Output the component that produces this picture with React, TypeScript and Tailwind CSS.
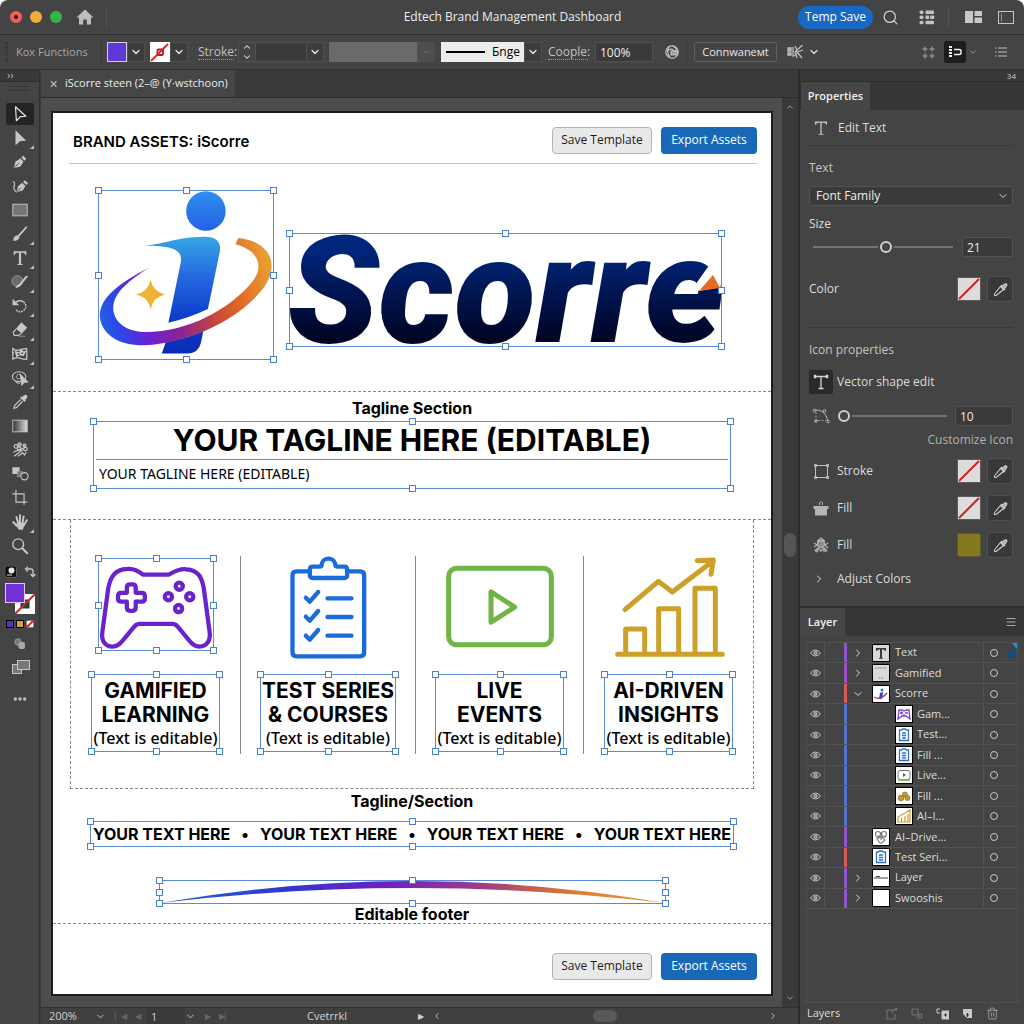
import type { ReactNode } from 'react'
import {
  ChevronDown,
  ChevronLeft,
  ChevronRight,
  ChevronUp,
  Menu,
  MoreHorizontal,
  Search,
  Trash2,
} from 'lucide-react'

const FEATURES = [
  { id: 'gamified', lines: ['GAMIFIED', 'LEARNING'], icon: <GamepadArt />, selected: true },
  { id: 'tests', lines: ['TEST SERIES', '& COURSES'], icon: <ClipboardArt />, selected: false },
  { id: 'live', lines: ['LIVE', 'EVENTS'], icon: <VideoArt />, selected: false },
  { id: 'insights', lines: ['AI-DRIVEN', 'INSIGHTS'], icon: <ChartArt />, selected: false },
]

const TICKER = ['YOUR TEXT HERE', '•', 'YOUR TEXT HERE', '•', 'YOUR TEXT HERE', '•', 'YOUR TEXT HERE']

type Layer = {
  name: string
  bar: string
  arrow?: 'right' | 'down'
  child?: boolean
  thumb: ReactNode
}

const LAYERS: Layer[] = [
  { name: 'Text', bar: 'bg-[#8e55cf]', arrow: 'right', thumb: <ThumbText /> },
  { name: 'Gamified', bar: 'bg-[#9c50c8]', arrow: 'right', thumb: <ThumbPage /> },
  { name: 'Scorre', bar: 'bg-[#d55a5a]', arrow: 'down', thumb: <ThumbLogo /> },
  { name: 'Gam...', bar: 'bg-[#5272cc]', child: true, thumb: <ThumbPad /> },
  { name: 'Test...', bar: 'bg-[#5272cc]', child: true, thumb: <ThumbClip /> },
  { name: 'Fill ...', bar: 'bg-[#5272cc]', child: true, thumb: <ThumbClip /> },
  { name: 'Live...', bar: 'bg-[#5272cc]', child: true, thumb: <ThumbLive /> },
  { name: 'Fill ...', bar: 'bg-[#5272cc]', child: true, thumb: <ThumbCoins /> },
  { name: 'AI–I...', bar: 'bg-[#5272cc]', child: true, thumb: <ThumbChart /> },
  { name: 'AI–Drive...', bar: 'bg-[#8e55cf]', thumb: <ThumbBrain /> },
  { name: 'Test Seri...', bar: 'bg-[#d55a5a]', thumb: <ThumbClip /> },
  { name: 'Layer', bar: 'bg-[#8e55cf]', arrow: 'right', thumb: <ThumbLine /> },
  { name: 'Swooshis', bar: 'bg-[#8e55cf]', arrow: 'right', thumb: null },
]

export default function App() {
  return (
    <div className="bg-white">
      <div className="flex min-h-screen flex-col overflow-hidden rounded-t-lg bg-[#444444] font-['Open_Sans',sans-serif] text-xs text-[#dcdcdc]">
        <TitleBar />
        <ControlBar />
        <div className="flex flex-1">
          <ToolColumn />
          <Workspace />
          <div className="flex w-[226px] shrink-0 flex-col border-l-2 border-[#2c2c2c]">
            <PropertiesPanel />
            <LayerPanel />
          </div>
        </div>
      </div>
    </div>
  )
}

/* ── Top bars ── */
function TitleBar() {
  return (
    <header className="flex h-[35px] items-center border-b border-[#303030] pr-[10px] pl-[10px]">
      <div className="flex items-center gap-2">
        <span className="flex size-3 items-center justify-center rounded-full bg-[#f0605a]">
          <span className="size-1 rounded-full bg-[#3a1010]" />
        </span>
        <span className="size-3 rounded-full bg-[#eeae3a]" />
        <span className="size-3 rounded-full bg-[#34b548]" />
      </div>
      <button aria-label="Home" className="ml-[14px]">
        <svg width="18" height="16" viewBox="0 0 18 16" fill="#bdbdbd">
          <path d="M9 0.5 17.5 8.5H15V15.5H10.8V10.5H7.2V15.5H3V8.5H0.5Z" />
        </svg>
      </button>
      <span className="ml-3 h-5 w-px bg-[#555]" />
      <h1 className="flex-1 pl-[120px] text-center text-[12px] text-[#ececec]">
        Edtech Brand Management Dashboard
      </h1>
      <button className="h-[23px] w-[75px] rounded-full bg-[#1769c4] text-[12px] text-white">Temp Save</button>
      <button aria-label="Search" className="ml-[9px]">
        <Search size={17} strokeWidth={1.75} className="text-[#cfcfcf]" />
      </button>
      <button aria-label="Grid view" className="ml-5">
        <svg width="16" height="15" viewBox="0 0 16 15" fill="#c2c2c2">
          <rect x="0.5" y="0.5" width="4" height="3.4" rx="1.5" />
          <rect x="6.5" y="0.5" width="8.5" height="3.4" rx="0.6" />
          <rect x="0.5" y="5.6" width="4" height="3.4" rx="1.5" />
          <rect x="6.5" y="5.6" width="3.6" height="3.4" rx="0.6" />
          <rect x="11.2" y="5.6" width="4" height="3.4" rx="0.6" />
          <rect x="0.5" y="10.8" width="4" height="3.4" rx="1.5" />
          <rect x="6.5" y="10.8" width="8.5" height="3.4" rx="1" />
        </svg>
      </button>
      <span className="ml-[13px] h-5 w-px bg-[#555]" />
      <button aria-label="Arrange panels" className="ml-4">
        <svg width="17" height="12" viewBox="0 0 17 12" fill="#c8c8c8">
          <rect width="8" height="12" />
          <rect x="9.5" width="7.5" height="5" />
          <rect x="9.5" y="6.5" width="7.5" height="5.5" />
        </svg>
      </button>
      <button aria-label="Workspace" className="ml-4">
        <svg width="16" height="13" viewBox="0 0 16 13" fill="none" stroke="#c8c8c8">
          <rect x="0.5" y="0.5" width="15" height="12" />
          <path d="M3.5 2.5V10.5" stroke="#999" />
        </svg>
      </button>
    </header>
  )
}

function DropButton({ label }: { label: string }) {
  return (
    <button aria-label={label} className="flex h-5 w-[18px] items-center justify-center border border-[#505050] bg-[#3d3d3d] text-[#e8e8e8]">
      <ChevronDown size={12} strokeWidth={2.5} />
    </button>
  )
}

function ControlBar() {
  return (
    <div className="flex h-[35px] items-center border-b border-[#303030] pl-[5px]">
      <span className="h-5 w-[3px] border-x border-dotted border-[#2c2c2c]" />
      <span className="ml-2 w-[86px] border-r border-[#383838] py-1 text-[11px] text-[#a8a8a8]">Kox Functions</span>
      <button aria-label="Fill colour" className="ml-[5px] size-5 border border-[#cfcfe8] bg-[#5f38d6]" />
      <DropButton label="Fill options" />
      <button aria-label="Stroke colour" className="ml-[5px] size-5 bg-white">
        <svg width="20" height="20" viewBox="0 0 20 20" fill="none" stroke="#d02626" strokeWidth="1.8">
          <rect x="7.5" y="7.5" width="5.5" height="5.5" rx="1" stroke="#a02030" />
          <path d="M1 19 18 2" />
        </svg>
      </button>
      <DropButton label="Stroke options" />
      <label htmlFor="stroke-width" className="ml-[10px] w-9 border-b border-dotted border-[#999] text-[12px] leading-[14px] whitespace-nowrap text-[#c0c0c0]">
        Stroke:
      </label>
      <span className="ml-1 flex h-5 w-[18px] shrink-0 flex-col items-center justify-center border border-[#505050] text-[#e8e8e8]">
        <ChevronUp size={10} strokeWidth={2.5} className="shrink-0" />
        <ChevronDown size={10} strokeWidth={2.5} className="shrink-0" />
      </span>
      <input id="stroke-width" className="h-5 w-[50px] border-y border-[#505050] bg-[#3a3a3a] px-1 outline-none" />
      <DropButton label="Stroke width list" />
      <span className="ml-[5px] h-5 w-[88px] bg-[#6a6a6a]" />
      <button aria-label="Profile" className="flex h-5 w-[18px] items-center justify-center bg-[#4e4e4e] text-[#777]">
        <ChevronDown size={10} />
      </button>
      <button className="ml-[6px] flex h-5 w-[83px] items-center bg-[#ececec] pl-[5px] text-[12px] text-black">
        <svg width="39" height="4" viewBox="0 0 39 4">
          <path d="M0 2H39" stroke="#000" strokeWidth="2" />
        </svg>
        <span className="ml-[7px]">Бnge</span>
      </button>
      <DropButton label="Brush list" />
      <label htmlFor="opacity" className="ml-[6px] w-10 border-b border-dotted border-[#999] text-[12px] leading-[14px] whitespace-nowrap text-[#c0c0c0]">
        Coople:
      </label>
      <input id="opacity" defaultValue="100%" className="ml-[7px] h-5 w-[58px] border border-[#505050] bg-[#3a3a3a] px-1 text-[12px] text-[#eee] outline-none" />
      <button aria-label="Recolor" className="ml-3">
        <svg width="14" height="14" viewBox="0 0 14 14" fill="none" stroke="#c4c4c4" strokeWidth="1.2">
          <circle cx="7" cy="7" r="6.2" />
          <path d="M4 1.5q-3 5 1 11M8 1q5 3 4.500 8M2 6q4-3 6-1t5 1" />
          <path d="M6 6h5v4H6Z" fill="#9a9a9a" />
        </svg>
      </button>
      <span className="ml-[7px] h-6 w-px bg-[#383838]" />
      <button className="ml-[7px] h-5 w-[83px] rounded-xs border border-[#606060] text-[11px] text-[#e6e6e6]">Connwaneмt</button>
      <button aria-label="Align" className="ml-[10px]">
        <svg width="17" height="16" viewBox="0 0 17 16" fill="none" stroke="#bdbdbd" strokeWidth="1.3">
          <path d="M1 4h3v3H1zM1 9h3v2H1z" fill="#a0a0a0" />
          <path d="M6 3v10M15.500 1 8 8l2 6M8 2l2 4M16 6l-6 2 5 6M7 12l4-3" />
        </svg>
      </button>
      <ChevronDown size={12} strokeWidth={2.5} className="ml-1" />
      <div className="ml-auto flex items-center pr-[17px]">
        <svg width="13" height="13" viewBox="0 0 13 13" stroke="#8a8a8a" strokeWidth="1.6">
          <path d="M3 0.5v5M0.5 3h5M10 0.5v5M7.5 3h5M3 7.5v5M0.5 10h5M10 7.5v5M7.5 10h5" />
        </svg>
        <button aria-label="Snap" className="ml-[9px] flex size-[22px] items-center justify-center rounded-xs bg-[#1d1d1d]">
          <svg width="14" height="14" viewBox="0 0 14 14" fill="none" stroke="#eee" strokeWidth="1.5">
            <path d="M2.5 1v12" strokeWidth="3" strokeDasharray="2 1" />
            <path d="M6 4.500h5q2 0 2 1.500v2q0 1.500-2 1.500H6" />
          </svg>
        </button>
        <ChevronDown size={10} className="ml-[2px] text-[#aaa]" />
        <button aria-label="Panel menu" className="ml-[17px]">
          <svg width="12" height="10" viewBox="0 0 12 10" stroke="#c0c0c0" strokeWidth="1.2">
            <path d="M0 1h1.5M3 1h9M0 5h1.5M3 5h9M0 9h1.5M3 9h9" />
          </svg>
        </button>
      </div>
    </div>
  )
}

/* ── Tool column ── */
const G = '#c6c6c6'

const TOOLS: { name: string; more?: boolean; icon: ReactNode }[] = [
  { name: 'Selection', icon: <path d="M5 2 16.500 12.500 10.500 13 6 17.500Z" fill="none" stroke="#e8e8e8" strokeWidth="1.3" strokeLinejoin="round" /> },
  { name: 'Direct selection', more: true, icon: <path d="M5 1.5 17 13 10.500 13.2 5 18Z" fill={G} /> },
  {
    name: 'Pen',
    icon: (
      <g fill={G}>
        <path d="M3 17 5 9.5 10.5 6 14 9.5 10.5 15Z" />
        <path d="M11.5 5 13.5 3 17 6.5 15 8.5Z" />
        <path d="M3.5 16.5 8.5 11.5" stroke="#444" strokeWidth="1" />
      </g>
    ),
  },
  {
    name: 'Curvature',
    icon: (
      <g>
        <path d="M6 17 8 10 12.5 6.5 16 10 13 15Z" fill={G} />
        <path d="M13.5 5.5 15.5 3.5 19 7 17 9Z" fill={G} />
        <path d="M2 5q3 1 1.5 5t3 7" fill="none" stroke={G} strokeWidth="1.3" />
        <path d="M6.5 16.5 11 12" stroke="#444" strokeWidth="1" />
      </g>
    ),
  },
  { name: 'Rectangle', icon: <rect x="2" y="3.500" width="16" height="13" fill="#767676" stroke={G} /> },
  {
    name: 'Brush',
    more: true,
    icon: (
      <g>
        <path d="M17 2.500 8.500 12" stroke={G} strokeWidth="2" strokeLinecap="round" />
        <path d="M2.500 17.500q0-5.500 5-6l2 2Q8.500 17.500 2.500 17.500Z" fill={G} />
      </g>
    ),
  },
  {
    name: 'Type',
    more: true,
    icon: <path d="M3 2.500h14v4.500h-1q-.5-2.700-3-2.700h-1.800v11.400q0 1.300 2 1.300v.8H6.800V17q2 0 2-1.300V4.300H7Q4.500 4.300 4 7H3Z" fill={G} />,
  },
  {
    name: 'Shape builder',
    more: true,
    icon: (
      <g>
        <circle cx="7" cy="9" r="6" fill="#6a6a6a" stroke="#999" />
        <path d="M19 3.500 11 13.500q-2 3-6 3.500 1-4 4-4.500L16.500 3Z" fill={G} />
      </g>
    ),
  },
  {
    name: 'Rotate',
    more: true,
    icon: (
      <g fill="none" stroke={G} strokeWidth="1.600">
        <path d="M4.500 6.500Q9 2.500 14 5.500" />
        <path d="M14 5.500q5 5 0 9.500-5 3.500-9-1.500" strokeDasharray="2 1" />
        <path d="M2 2.500v6.500h6.500Z" fill={G} strokeWidth="0.500" />
      </g>
    ),
  },
  {
    name: 'Eraser',
    more: true,
    icon: (
      <g>
        <path d="M11.500 1.500 18 7.500 12 14 5.500 8.500Z" fill={G} />
        <path d="M5.500 9 2.500 12.500 3.500 16h5L12 13.500" fill="none" stroke={G} strokeWidth="1.300" />
        <path d="M8 17h8" stroke="#8a8a8a" />
      </g>
    ),
  },
  {
    name: 'Width',
    more: true,
    icon: (
      <g>
        <path d="M1.500 4q4 3 8 1.500T18 4M1.500 16q4-3 8-1.500T18 16M2 3v13M3 8l-1.500 3M17.500 4v12" fill="none" stroke={G} strokeWidth="1.400" />
        <path d="M4 6.500 9 8l2-4 3 3 3-.5-3 6-4-1-4 2Z" fill={G} />
        <circle cx="8.500" cy="10" r="1" fill="#444" />
        <circle cx="12.500" cy="9" r="1" fill="#444" />
      </g>
    ),
  },
  {
    name: 'Lasso',
    more: true,
    icon: (
      <g fill="none" stroke={G} strokeWidth="1.200">
        <ellipse cx="9" cy="8.500" rx="7.500" ry="5.500" />
        <ellipse cx="9" cy="8.500" rx="3" ry="2.500" strokeDasharray="1.500 1" />
        <path d="M5 13.500q1 3 5 2" />
        <path d="M10.500 6.500 18.500 14.500l-4 .2-2.500 3Z" fill={G} />
      </g>
    ),
  },
  {
    name: 'Eyedropper',
    icon: (
      <g>
        <path d="M12.500 4.500q3-4 5-2t-1.500 5l.5 1-1.500 1.500-5-5L11.500 4Z" fill={G} />
        <path d="M11 7 4 14l-.8 3L6 16.300 13 9.200" fill="none" stroke={G} strokeWidth="1.300" />
      </g>
    ),
  },
  {
    name: 'Gradient',
    icon: (
      <g>
        <defs>
          <linearGradient id="tool-grad">
            <stop stopColor="#333" />
            <stop offset="1" stopColor="#ddd" />
          </linearGradient>
        </defs>
        <rect x="2" y="3.500" width="16" height="13" fill="url(#tool-grad)" stroke={G} />
      </g>
    ),
  },
  {
    name: 'Symbol sprayer',
    icon: (
      <g fill="none" stroke={G} strokeWidth="1.400">
        <circle cx="5.500" cy="6" r="2" />
        <circle cx="9.500" cy="4" r="1.800" fill="#888" />
        <circle cx="9" cy="8.500" r="2" />
        <circle cx="16" cy="9" r="2" />
        <circle cx="15" cy="5" r="1.500" fill="#888" />
        <path d="M2.500 12.500 13 8M3.500 17l9.500-7.500M7.500 17l5-3.500M12 12l3 3.500 2-3" />
      </g>
    ),
  },
  {
    name: 'Blend',
    icon: (
      <g>
        <rect x="1.500" y="2.500" width="8" height="7.500" fill={G} />
        <rect x="7" y="7.500" width="6" height="5.500" fill="#777" stroke="#999" strokeWidth="0.800" />
        <circle cx="15" cy="12.500" r="4" fill="#444" stroke={G} strokeWidth="1.200" />
      </g>
    ),
  },
  { name: 'Artboard', icon: <path d="M5.500 1v13.500H18M1.500 5.500h13v12" fill="none" stroke={G} strokeWidth="1.300" /> },
  {
    name: 'Hand',
    more: true,
    icon: (
      <g fill="none" stroke={G} strokeWidth="2.200" strokeLinecap="round">
        <path d="M2.500 10 6.500 14.500M6 4.500 8 11M10 2.500v8.500M14 4 12.800 11M17.500 8l-3 5.500" />
        <path d="M7 12h7l-1.500 5.500H9Z" fill={G} strokeLinejoin="round" />
      </g>
    ),
  },
  {
    name: 'Zoom',
    icon: (
      <g fill="none" stroke={G} strokeLinecap="round">
        <circle cx="8" cy="8" r="6" strokeWidth="1.500" />
        <path d="M12.800 12.800 18 18" strokeWidth="2.300" />
      </g>
    ),
  },
]

function ToolColumn() {
  return (
    <aside className="w-10 shrink-0 border-r border-[#303030]">
      <div className="h-3 border-b border-[#2e2e2e] bg-[#383838] pl-[7px] text-[11px] leading-[10px] text-[#bbb]">››</div>
      <div className="mx-[10px] mt-1 h-[5px] border-y border-dotted border-[#2a2a2a]" />
      <nav aria-label="Tools" className="mt-[11px] flex flex-col pl-[6px]">
        {TOOLS.map((tool, i) => (
          <button key={tool.name} aria-label={tool.name} className="flex h-6 items-center">
            <span className={i === 0 ? 'flex h-[22px] w-7 items-center justify-center rounded-xs bg-[#242424]' : 'relative flex h-[22px] w-7 items-center justify-center'}>
              <svg width="18" height="18" viewBox="0 0 20 20">
                {tool.icon}
              </svg>
              {tool.more && (
                <svg width="4" height="4" viewBox="0 0 4 4" className="absolute right-0 bottom-0">
                  <path d="M4 0V4H0Z" fill="#bdbdbd" />
                </svg>
              )}
            </span>
          </button>
        ))}
      </nav>
      <div className="mr-[3px] ml-[5px] mt-2 flex items-center justify-between">
        <svg width="12" height="12" viewBox="0 0 12 12">
          <rect width="11.500" height="11.500" rx="2" fill="#0e0e0e" stroke="#999" strokeWidth="0.500" />
          <circle cx="6.500" cy="4.500" r="3" fill="#e8e8e8" />
          <path d="M2 9h5" stroke="#ddd" />
        </svg>
        <svg width="12" height="12" viewBox="0 0 12 12" fill="none" stroke={G} strokeWidth="1.300">
          <path d="M3 3h4q2 0 2 2v4M4 1 1.500 3 4 5.500M6.500 8 9 10.500 11.500 8" />
        </svg>
      </div>
      <div className="relative mt-[5px] ml-[5px] h-[31px] w-[30px]">
        <svg width="20" height="20" viewBox="0 0 20 20" className="absolute right-0 bottom-0">
          <rect width="20" height="20" fill="#fff" />
          <rect x="6" y="6" width="8" height="8" fill="#1f4a2c" stroke="#333" />
          <path d="M0 20 20 0" stroke="#d02626" strokeWidth="2" />
        </svg>
        <button aria-label="Fill" className="absolute top-0 left-0 size-5 border border-[#d9c8f0] bg-[#7330d8]" />
      </div>
      <div className="mt-[6px] ml-[6px] flex gap-[2px]">
        <span className="size-2 border border-black bg-[#5b2fc4]" />
        <span className="size-2 border border-black bg-[#d0a63a]" />
        <svg width="8" height="8" viewBox="0 0 8 8">
          <rect width="8" height="8" fill="#fff" stroke="#000" />
          <path d="M0 8 8 0" stroke="#d02626" strokeWidth="2" />
        </svg>
      </div>
      <svg width="12" height="12" viewBox="0 0 12 12" className="mt-[10px] ml-[14px]">
        <circle cx="4" cy="4" r="3.200" fill="#777" stroke="#999" />
        <rect x="4.500" y="4" width="6.500" height="7" rx="2" fill="#a8a8a8" />
      </svg>
      <svg width="18" height="14" viewBox="0 0 18 14" fill="#777" stroke={G} className="mt-[10px] ml-3">
        <rect x="0.500" y="4.500" width="9" height="9" />
        <rect x="5.500" y="0.500" width="12" height="9" />
      </svg>
      <button aria-label="More tools" className="mt-[17px] ml-3 flex">
        <MoreHorizontal size={16} strokeWidth={3} className="text-[#c6c6c6]" />
      </button>
    </aside>
  )
}

/* ── Canvas ── */
function Workspace() {
  return (
    <main className="flex min-w-0 flex-1 flex-col bg-[#3a3a3a] pl-px">
      <div className="flex h-7 border-b border-[#2c2c2c]">
        <div className="flex items-center bg-[#464646] pr-[7px] pl-2 text-[11px] text-[#ececec]">
          <button aria-label="Close document" className="mr-[7px] text-[11px] leading-none text-[#c0c0c0]">✕</button>
          iScorre steen (2–@ (Y·wstchoon)
        </div>
      </div>
      <div className="flex flex-1">
        <div className="min-w-0 flex-1 bg-[#4d4d4d] pt-[13px] pr-[9px] pb-[11px] pl-[10px]">
          <Artboard />
        </div>
        <div className="flex w-4 flex-col items-center bg-[#393939] py-1 text-[#aaa]">
          <ChevronUp size={10} />
          <span className="flex flex-1 items-center">
            <span className="mb-4 h-6 w-3 rounded-full bg-[#555]" />
          </span>
          <ChevronDown size={10} />
        </div>
      </div>
      <StatusBar />
    </main>
  )
}

function StatusBar() {
  return (
    <footer className="flex h-[17px] items-center border-t border-[#303030] bg-[#404040] pl-2 text-[11px] text-[#d0d0d0]">
      <input aria-label="Zoom level" defaultValue="200%" className="w-[46px] bg-transparent outline-none" />
      <ChevronDown size={11} />
      <span className="ml-[9px] text-[8px] text-[#666]">▏◀</span>
      <span className="ml-2 text-[8px] text-[#666]">◀</span>
      <input aria-label="Artboard number" defaultValue="1" className="ml-[6px] h-full w-[38px] bg-[#3a3a3a] px-1 outline-none" />
      <ChevronDown size={11} />
      <span className="ml-[9px] text-[8px] text-[#666]">▶</span>
      <span className="ml-2 text-[8px] text-[#666]">▶▏</span>
      <span className="ml-[76px]">Cvetrrkl</span>
      <span className="ml-[71px] text-[8px]">▶</span>
      <ChevronLeft size={10} className="ml-2" />
      <span className="flex flex-1 justify-center">
        <span className="h-3 w-6 rounded-full bg-[#585858]" />
      </span>
      <ChevronRight size={10} className="mr-5" />
    </footer>
  )
}

/* Bounding box with its grab handles */
const HANDLES = {
  tl: '-top-[4px] -left-[4px]',
  tc: '-top-[4px] left-1/2 -ml-[3px]',
  tr: '-top-[4px] -right-[4px]',
  ml: 'top-1/2 -mt-[3px] -left-[4px]',
  mr: 'top-1/2 -mt-[3px] -right-[4px]',
  bl: '-bottom-[4px] -left-[4px]',
  bc: '-bottom-[4px] left-1/2 -ml-[3px]',
  br: '-bottom-[4px] -right-[4px]',
}

const CORNERS_AND_MIDDLES: (keyof typeof HANDLES)[] = ['tl', 'tc', 'tr', 'bl', 'bc', 'br']
const ALL_HANDLES: (keyof typeof HANDLES)[] = ['tl', 'tc', 'tr', 'ml', 'mr', 'bl', 'bc', 'br']

function Selection({ sides, className, children }: { sides?: boolean; className?: string; children: ReactNode }) {
  const handles = sides ? ALL_HANDLES : CORNERS_AND_MIDDLES
  return (
    <div className={`relative border border-[#5b8ad6] ${className ?? ''}`}>
      {children}
      {handles.map(h => (
        <span key={h} className={`absolute size-[7px] border border-[#4a80d4] bg-white ${HANDLES[h]}`} />
      ))}
    </div>
  )
}

function ActionButtons() {
  return (
    <div className="flex gap-[9px] text-[12px]">
      <button className="h-[27px] w-[100px] rounded-sm border border-[#b4b4b4] bg-[#e9e9e9] text-[#1c1c1c]">Save Template</button>
      <button className="h-[27px] w-24 rounded-sm bg-[#1769b8] text-white">Export Assets</button>
    </div>
  )
}

function Artboard() {
  return (
    <article className="border-2 border-[#1c1c1c] bg-white font-['Inter',sans-serif] text-black">
      <header className="mr-[14px] ml-4 flex h-[51px] items-center justify-between border-b border-[#c4c4c4] pt-1 pl-1">
        <h2 className="pt-1 text-[15px] font-semibold">BRAND ASSETS: iScorre</h2>
        <div className="font-['Open_Sans',sans-serif]">
          <ActionButtons />
        </div>
      </header>

      <section className="flex h-[228px] justify-center gap-[15px] border-b border-dashed border-[#888] pt-[26px] pr-[5px]">
        <Selection sides className="h-[170px] w-[176px]">
          <LogoMark />
        </Selection>
        <Selection sides className="mt-[43px] h-[114px] w-[433px]">
          <p className="-mt-[43px] -mr-4 -ml-[2px] bg-linear-to-b from-[#00267c] from-30% to-[#000524] to-75% bg-clip-text font-['Roboto',sans-serif] text-[150px] leading-[200px] font-black whitespace-nowrap text-transparent italic">
            Scorre
          </p>
          <svg width="24" height="18" viewBox="0 0 24 18" className="absolute top-[40px] right-0 overflow-visible">
            <path d="M2 17-4 14 13-10 23-10V13Z" fill="#fff" />
            <path d="M2 17 16 1 23 14Z" fill="#ea6a24" />
          </svg>
        </Selection>
      </section>

      <section className="flex h-32 flex-col border-b border-dashed border-[#888] px-10 pt-1">
        <h3 className="text-center text-base font-bold">Tagline Section</h3>
        <Selection className="mt-px h-[68px]">
          <p className="mx-[2px] h-[38px] border-b border-[#5b8ad6] text-center text-[30px] leading-9 font-bold">
            YOUR TAGLINE HERE (EDITABLE)
          </p>
          <p className="pt-1 pl-[5px] font-['Noto_Sans',sans-serif] text-sm">YOUR TAGLINE HERE (EDITABLE)</p>
        </Selection>
      </section>

      <section className="mr-[17px] ml-[17px] h-[269px] border-x border-b border-dashed border-[#888] pt-9">
        <div className="grid h-[198px] grid-cols-[170fr_175fr_168fr_169fr] divide-x divide-[#888]">
          {FEATURES.map(f => (
            <div key={f.id} className="flex flex-col items-center">
              <div className="flex h-[118px] items-start">
                {f.selected ? (
                  <Selection sides className="mt-[2px] h-[93px] w-[116px]">{f.icon}</Selection>
                ) : (
                  f.icon
                )}
              </div>
              <Selection className="h-[78px] px-px">
                <h4 className="pt-1 text-center text-[21px] leading-6 font-bold whitespace-nowrap">
                  {f.lines[0]}
                  <br />
                  {f.lines[1]}
                </h4>
                <p className="text-center font-['Noto_Sans',sans-serif] text-base leading-[22px] font-medium">(Text is editable)</p>
              </Selection>
            </div>
          ))}
        </div>
      </section>

      <section className="flex h-[135px] flex-col items-center border-b border-dashed border-[#888]">
        <h3 className="text-base font-bold">Tagline/Section</h3>
        <Selection className="mt-2 h-[26px] w-[644px]">
          <p className="flex justify-between px-[2px] text-base font-bold">
            {TICKER.map((word, i) => (
              <span key={i}>{word}</span>
            ))}
          </p>
        </Selection>
        <Selection sides className="mt-[33px] h-6 w-[507px]">
          <svg width="505" height="22" viewBox="0 0 505 22">
            <defs>
              <linearGradient id="swoosh">
                <stop stopColor="#2563d8" />
                <stop offset="0.250" stopColor="#3038d0" />
                <stop offset="0.450" stopColor="#7020c0" />
                <stop offset="0.650" stopColor="#a04080" />
                <stop offset="0.820" stopColor="#e07a30" />
                <stop offset="1" stopColor="#e0a040" />
              </linearGradient>
            </defs>
            <path d="M0 22Q252-22 505 22 252-8 0 22Z" fill="url(#swoosh)" />
          </svg>
        </Selection>
        <h3 className="text-base leading-5 font-bold">Editable footer</h3>
      </section>

      <footer className="flex h-[70px] items-center justify-end px-[14px] pt-[14px] font-['Open_Sans',sans-serif]">
        <ActionButtons />
      </footer>
    </article>
  )
}

/* ── Artboard drawings ── */
function LogoMark() {
  return (
    <svg width="174" height="168" viewBox="55 60 525 510">
      <defs>
        <linearGradient id="dot" x1="0" y1="0" x2="0" y2="1">
          <stop stopColor="#2e90ee" />
          <stop offset="1" stopColor="#2460e4" />
        </linearGradient>
        <linearGradient id="stem" x1="0" y1="200" x2="0" y2="553" gradientUnits="userSpaceOnUse">
          <stop stopColor="#36a4e4" />
          <stop offset="0.350" stopColor="#2468e0" />
          <stop offset="0.700" stopColor="#0c3ccc" />
          <stop offset="1" stopColor="#0a2cb4" />
        </linearGradient>
        <linearGradient id="orbit" x1="56" y1="430" x2="575" y2="300" gradientUnits="userSpaceOnUse">
          <stop stopColor="#2560e0" />
          <stop offset="0.080" stopColor="#2a48e8" />
          <stop offset="0.240" stopColor="#6a20d4" />
          <stop offset="0.420" stopColor="#8c2492" />
          <stop offset="0.620" stopColor="#c4463c" />
          <stop offset="0.800" stopColor="#e26c26" />
          <stop offset="1" stopColor="#e8a034" />
        </linearGradient>
      </defs>
      <circle cx="378" cy="121" r="60" fill="url(#dot)" />
      <path d="M190 226C262 220 290 200 368 199 410 197 425 214 420 245L384 418Q330 444 264 460L302 275C306 240 284 226 190 226Z" fill="url(#stem)" />
      <path d="M256 519Q312 510 370 486L363 520Q356 553 322 553H244Z" fill="url(#stem)" />
      <path
        d="M204 294C112 340 54 388 56 440 60 500 122 530 192 528 330 522 470 450 538 372 606 300 586 214 476 203L468 222C540 242 554 290 520 334 450 420 320 490 190 488 98 484 66 408 130 350 152 328 176 312 204 294Z"
        fill="url(#orbit)"
      />
      <path d="M210 328Q216 366 254 374 216 382 210 420 204 382 165 374 204 366 210 328Z" fill="#f0b232" />
    </svg>
  )
}

function GamepadArt() {
  return (
    <svg width="114" height="91" viewBox="111 56 348 275" fill="none" stroke="#6a22cc" strokeWidth="13" strokeLinejoin="round">
      <path d="M245 102H325C348 88 362 84 378 86 415 88 425 112 431 145L449 280C452 305 438 322 418 322 404 322 394 314 386 303L352 262Q345 253 334 253H236Q225 253 218 262L184 303C176 314 166 322 152 322 130 322 118 305 121 280L139 145C145 112 158 86 198 85 216 83 230 90 245 102Z" />
      <path d="M196 142Q196 132 206 132H213Q223 132 223 142V158H241Q251 158 251 168V175Q251 185 241 185H223V203Q223 213 213 213H206Q196 213 196 203V185H179Q169 185 169 175V168Q169 158 179 158H196Z" />
      <circle cx="356" cy="138" r="11" />
      <circle cx="323" cy="170" r="11" />
      <circle cx="388" cy="170" r="11" />
      <circle cx="354" cy="206" r="11" />
    </svg>
  )
}

function ClipboardArt() {
  return (
    <svg width="77" height="103" viewBox="689 45 230 309" fill="none" stroke="#1b6cd8" strokeWidth="13" strokeLinecap="round" strokeLinejoin="round">
      <path d="M742 91H708Q696 91 696 103V334Q696 346 708 346H899Q911 346 911 334V103Q911 91 899 91H866" />
      <path d="M748 86Q748 77 757 77H776Q784 77 784 68C788 48 820 48 824 68Q824 77 832 77H851Q860 77 860 86V103Q860 111 851 111H757Q748 111 748 103Z" />
      <path d="M736 170 748 182 773 153M736 227 748 239 773 210M736 284 748 296 773 267M801 172H873M801 228H873M801 284H873" />
    </svg>
  )
}

function VideoArt() {
  return (
    <svg width="108" height="83" viewBox="134 76 324 248" fill="none" stroke="#6fb444" strokeWidth="15" strokeLinejoin="round" className="mt-[9px]">
      <rect x="142" y="85" width="308" height="230" rx="24" />
      <path d="M269 156V247L340 202Z" />
    </svg>
  )
}

function ChartArt() {
  return (
    <svg width="112" height="102" viewBox="644 48 336 306" fill="none" stroke="#cda02a" strokeWidth="15" strokeLinecap="round" strokeLinejoin="round">
      <path d="M658 343H972M682 340V267H739V340M781 340V206H841V340M890 340V145H951V340" />
      <path d="M680 209 780 124 822 156 940 66M897 62 945 60 938 103" />
    </svg>
  )
}

/* ── Properties ── */
function NoColor() {
  return (
    <svg width="24" height="24" viewBox="0 0 24 24">
      <rect x="0.500" y="0.500" width="23" height="23" rx="1" fill="#dcdcdc" stroke="#5a5a5a" />
      <path d="M2 22 22 2" stroke="#cf2020" strokeWidth="2" />
    </svg>
  )
}

function Dropper() {
  return (
    <svg width="15" height="15" viewBox="0 0 15 15" fill="none" stroke="#d0d0d0" strokeWidth="1.100">
      <path d="M7.500 4.500 2.500 10.500q-1.700 2-1 2.800t2.800-.8L10.500 7.500" />
      <path d="M9.500 4q2.500-3 4-2t-2 4l.5 1-1 1-3.500-3.500 1-1Z" fill="#a8a8a8" />
    </svg>
  )
}

function ColorRow({ label, icon, olive, className }: { label: string; icon?: ReactNode; olive?: boolean; className: string }) {
  return (
    <div className={`flex h-6 items-center ${className}`}>
      {icon && <span className="mr-1 flex w-6 justify-center">{icon}</span>}
      <span className="flex-1">{label}</span>
      <button aria-label={`${label} colour`}>
        {olive ? <span className="block size-6 rounded-xs border border-[#5f5a30] bg-[#85791f]" /> : <NoColor />}
      </button>
      <button aria-label={`Pick ${label}`} className="ml-[6px] flex size-[26px] items-center justify-center rounded-sm border border-[#505050] bg-[#383838]">
        <Dropper />
      </button>
    </div>
  )
}

const RANGE =
  'h-3 min-w-0 appearance-none bg-transparent [&::-webkit-slider-runnable-track]:h-[2px] [&::-webkit-slider-runnable-track]:bg-[#737373] [&::-webkit-slider-thumb]:-mt-[5px] [&::-webkit-slider-thumb]:size-3 [&::-webkit-slider-thumb]:appearance-none [&::-webkit-slider-thumb]:rounded-full [&::-webkit-slider-thumb]:border-2 [&::-webkit-slider-thumb]:border-[#d0d0d0] [&::-webkit-slider-thumb]:bg-[#444] [&::-webkit-slider-thumb]:shadow-[0_0_0_2px_#444]'

const FIELD = 'h-5 rounded-xs border border-[#525252] bg-[#3a3a3a] px-1 text-[12px] text-[#ececec] outline-none'

function PropertiesPanel() {
  return (
    <section aria-label="Properties" className="border-b-2 border-[#2f2f2f]">
      <div className="h-3 border-b border-[#2e2e2e] bg-[#383838] pr-2 text-right text-[8px] leading-3 text-[#ccc]">34</div>
      <div className="flex h-7 border-l border-[#303030] bg-[#363636]">
        <h2 className="flex w-[69px] items-center justify-center bg-[#464646] text-[11px] font-semibold text-[#f0f0f0]">Properties</h2>
      </div>
      <div className="h-[496px] pr-[11px] pl-[9px]">
        <div className="flex h-9 items-center border-b border-[#383838]">
          <svg width="14" height="14" viewBox="3 3 14 15" className="mr-[10px] ml-[5px]">
            <path d="M3.500 3.500h13v3.500h-1q-.5-2-3-2h-1.800v11q0 1 2 1v.7H7.300V17q2 0 2-1V5H7.500q-2.500 0-3 2h-1Z" fill="#c2c2c2" />
          </svg>
          Edit Text
        </div>
        <h3 className="mt-3 leading-5 text-[#c4c4c4]">Text</h3>
        <div className="relative mt-2">
          <select aria-label="Font family" className={`${FIELD} w-full appearance-none pl-[6px]`}>
            <option>Font Family</option>
          </select>
          <ChevronDown size={12} className="pointer-events-none absolute top-1 right-1" />
        </div>
        <label htmlFor="size" className="mt-2 block leading-5">Size</label>
        <div className="mt-[3px] flex h-5 items-center justify-between pl-1">
          <input id="size" type="range" min={0} max={40} defaultValue={21} className={`${RANGE} w-[140px]`} />
          <input aria-label="Size value" defaultValue="21" className={`${FIELD} w-[51px]`} />
        </div>
        <ColorRow label="Color" className="mt-5" />
        <div className="mt-[26px] border-t border-[#383838]" />
        <h3 className="mt-3 leading-5 text-[#c4c4c4]">Icon properties</h3>
        <div className="mt-[10px] flex h-6 items-center">
          <button aria-label="Vector shape edit" className="mr-1 flex size-6 items-center justify-center rounded-xs bg-[#2a2a2a]">
            <svg width="16" height="16" viewBox="0 0 16 16" fill="none" stroke="#d4d4d4" strokeWidth="1.300">
              <path d="M2.500 2.500h11M8 3v11M5.500 14.500h5" />
              <path d="M1 1h2v3H1zM13 1h2v3h-2z" fill="#d4d4d4" strokeWidth="0.500" />
            </svg>
          </button>
          Vector shape edit
        </div>
        <div className="mt-3 flex h-5 items-center">
          <svg width="18" height="16" viewBox="0 0 18 16" fill="none" stroke="#b8b8b8" className="mr-[8px] ml-[3px]">
            <path d="M3 2q10-1 13 11" />
            <path d="M4 4v8.500h10" strokeDasharray="2 1.500" strokeWidth="0.800" />
            <circle cx="2.500" cy="2.500" r="1.300" />
            <circle cx="12.500" cy="3" r="1.300" />
            <circle cx="16" cy="13.500" r="1.300" />
            <circle cx="4" cy="13" r="1.300" />
          </svg>
          <input aria-label="Vector weight" type="range" min={10} max={100} defaultValue={10} className={`${RANGE} flex-1`} />
          <input aria-label="Weight value" defaultValue="10" className={`${FIELD} ml-2 w-[58px]`} />
        </div>
        <p className="mt-1 text-right leading-5 text-[#b0b0b0]">Customize Icon</p>
        <ColorRow
          label="Stroke"
          className="mt-[9px]"
          icon={
            <svg width="17" height="17" viewBox="0 0 17 17" fill="none" stroke="#c0c0c0">
              <rect x="2.500" y="2.500" width="12" height="12" />
              <path d="M1.500 1.500h2v2h-2zM13.500 1.500h2v2h-2zM1.500 13.500h2v2h-2zM13.500 13.500h2v2h-2z" fill="#999" />
            </svg>
          }
        />
        <ColorRow
          label="Fill"
          className="mt-[13px]"
          icon={
            <svg width="16" height="16" viewBox="0 0 16 16" fill="#b4b4b4">
              <path d="M0.500 6h15v3h-1.500V15.500H2V9H0.500Z" />
              <path d="M6.500 5V3q1.500-3 3 0v2" fill="none" stroke="#b4b4b4" />
            </svg>
          }
        />
        <ColorRow
          label="Fill"
          olive
          className="mt-[13px]"
          icon={
            <svg width="16" height="16" viewBox="0 0 16 16" fill="none" stroke="#b4b4b4" strokeWidth="1.300">
              <path d="M4 4.500 8 1l4 3.500M1 6l3 2-3 2M15 6l-3 2 3 3M2 14l3-3 3 3 3-3 3 3" />
              <circle cx="8" cy="7" r="3.500" fill="#8a8a8a" />
              <path d="M2.500 12.500h2.500v2.500H2.500zM10.500 12h3v2.500h-3z" fill="#999" strokeWidth="0.500" />
            </svg>
          }
        />
        <button className="mt-3 flex h-5 items-center">
          <ChevronRight size={12} className="mr-[12px] ml-1" />
          Adjust Colors
        </button>
      </div>
    </section>
  )
}

/* ── Layers ── */
function LayerPanel() {
  return (
    <section aria-label="Layers" className="flex flex-1 flex-col">
      <div className="flex h-7 items-center justify-between bg-[#363636] pr-[7px]">
        <h2 className="flex h-full w-[45px] items-center justify-center bg-[#464646] text-[11px] font-semibold text-[#f0f0f0]">Layer</h2>
        <Menu size={12} className="text-[#aaa]" />
      </div>
      <div className="mx-[6px] mt-[6px] flex-1 border border-[#505050]">
        <ul className="grid h-[266px] auto-rows-fr text-[11px]">
          {LAYERS.map((layer, i) => (
            <li key={i} className="relative flex items-center border-b border-[#515151]">
              <span className="flex h-full w-[18px] items-center justify-center border-r border-[#515151]">
                <Eye />
              </span>
              <span className="w-[19px]" />
              <span className={`h-full w-[3px] ${layer.bar}`} />
              <span className="ml-[3px] flex w-4 justify-center">
                {layer.arrow === 'right' && <ChevronRight size={12} />}
                {layer.arrow === 'down' && <ChevronDown size={12} />}
              </span>
              <span className={layer.child ? 'mr-[5px] ml-[30px] block size-4 bg-white outline outline-black' : 'mr-[6px] ml-[7px] block size-4 bg-white outline outline-black'}>
                {layer.thumb && (
                  <svg width="16" height="16" viewBox="0 0 16 16" fill="none">
                    {layer.thumb}
                  </svg>
                )}
              </span>
              <span className="flex-1 whitespace-nowrap">{layer.name}</span>
              <span className="flex h-full w-[34px] items-center border-l border-[#515151] pl-[6px]">
                <span className="size-2 rounded-full border border-[#c8c8c8]" />
              </span>
              {i === 0 && (
                <svg width="11" height="15" viewBox="0 0 11 15" className="absolute top-0 right-0">
                  <path d="M2 15q-2-3 0-6l4-4 5 5v5Z" fill="#1d4a78" />
                  <path d="M6 0h5v6Z" fill="#2196ea" />
                </svg>
              )}
            </li>
          ))}
        </ul>
      </div>
      <div className="flex h-[21px] items-center pr-[25px] pl-[7px] text-[11px]">
        <span className="flex-1">Layers</span>
        <div className="flex items-center gap-[13px]">
          <svg width="12" height="12" viewBox="0 0 12 12" fill="none" stroke="#777">
            <path d="M7 2H1v9h8V6M6 5q1-4 5-4M9 0l2 1-1 2" />
          </svg>
          <svg width="12" height="12" viewBox="0 0 12 12" fill="none" stroke="#777">
            <path d="M1 1h6v6H1zM5 9h2M8 6h3v4H8z" />
          </svg>
          <svg width="13" height="12" viewBox="0 0 13 12" fill="none" stroke="#c8c8c8">
            <path d="M4 1H1v4h3" />
            <path d="M6 3h7v8H6z" fill="#c8c8c8" />
            <path d="M9.500 5.500v3M8 7h3" stroke="#333" />
          </svg>
          <svg width="11" height="11" viewBox="0 0 11 11">
            <path d="M1 1h9v9H5L1 6Z" fill="#c8c8c8" />
            <path d="M5.500 5v4M4 7h3" stroke="#333" />
          </svg>
          <Trash2 size={13} strokeWidth={1.5} className="text-[#a8a8a8]" />
        </div>
      </div>
    </section>
  )
}

function Eye() {
  return (
    <svg width="11" height="8" viewBox="0 0 11 8" fill="none" stroke="#c4c4c4">
      <path d="M0.500 4Q5.500-2 10.500 4 5.500 10 0.500 4Z" />
      <circle cx="5.500" cy="4" r="1.600" fill="#888" />
    </svg>
  )
}

function ThumbText() {
  return (
    <>
      <rect width="16" height="16" fill="#d8d8d8" />
      <path d="M3 3h10v3h-1q0-1.500-2-1.500H9v7.500q0 1 1 1v.8H6V13q1 0 1-1V4.500H6Q4 4.500 4 6H3Z" fill="#3a3a3a" />
    </>
  )
}
function ThumbPage() {
  return (
    <>
      <rect width="16" height="16" fill="#dadada" />
      <path d="M2 3h12M6 13h4" stroke="#777" strokeDasharray="1 0.500" />
    </>
  )
}
function ThumbLogo() {
  return (
    <>
      <path d="M7 7 10 6 9 13H6Z" fill="#1746c8" />
      <circle cx="9" cy="4" r="1.500" fill="#2a78e4" />
      <path d="M1 11q6 4 13-4" stroke="#c43a5a" strokeWidth="1.500" />
    </>
  )
}
function ThumbPad() {
  return (
    <g stroke="#7a3fd0" strokeWidth="1.300">
      <path d="M2 13 3 4h3l2 1 2-1h3l1 9-4-3H6Z" />
      <path d="M4 7h3M9 7h3M5.500 5.500v3M8 8v1.500" />
    </g>
  )
}
function ThumbClip() {
  return <path d="M3.500 3h2l1-1h3l1 1h2v10.500h-9ZM6 6h4M6 8.500h4M6 11h4" stroke="#2a74cc" strokeWidth="1.300" />
}
function ThumbLive() {
  return (
    <>
      <rect x="2" y="3.500" width="12" height="9" rx="2" stroke="#777" />
      <path d="M2 13h12" stroke="#78b82c" strokeWidth="1.500" />
      <path d="M7 6v4l3-2Z" fill="#555" />
    </>
  )
}
function ThumbCoins() {
  return (
    <g fill="#c89a30" stroke="#8a6a1c" strokeWidth="0.700">
      <circle cx="5" cy="10" r="2.800" />
      <circle cx="9" cy="6.500" r="2.500" />
      <circle cx="11.500" cy="10" r="2.500" />
    </g>
  )
}
function ThumbChart() {
  return <path d="M2 14V9L14 2v12ZM5.500 14V9.500M9 14V8M12 14V6" stroke="#cf9a2c" strokeWidth="1.200" />
}
function ThumbBrain() {
  return (
    <g stroke="#777" strokeWidth="1.100">
      <circle cx="5" cy="5" r="2.500" />
      <circle cx="11" cy="5" r="2.500" />
      <path d="M3 8h10M4 10q4-4 8 1l-3 3H7ZM8 3v8" />
    </g>
  )
}
function ThumbLine() {
  return <path d="M1 8h14M3 6.500h4" stroke="#444" strokeWidth="1.200" />
}
